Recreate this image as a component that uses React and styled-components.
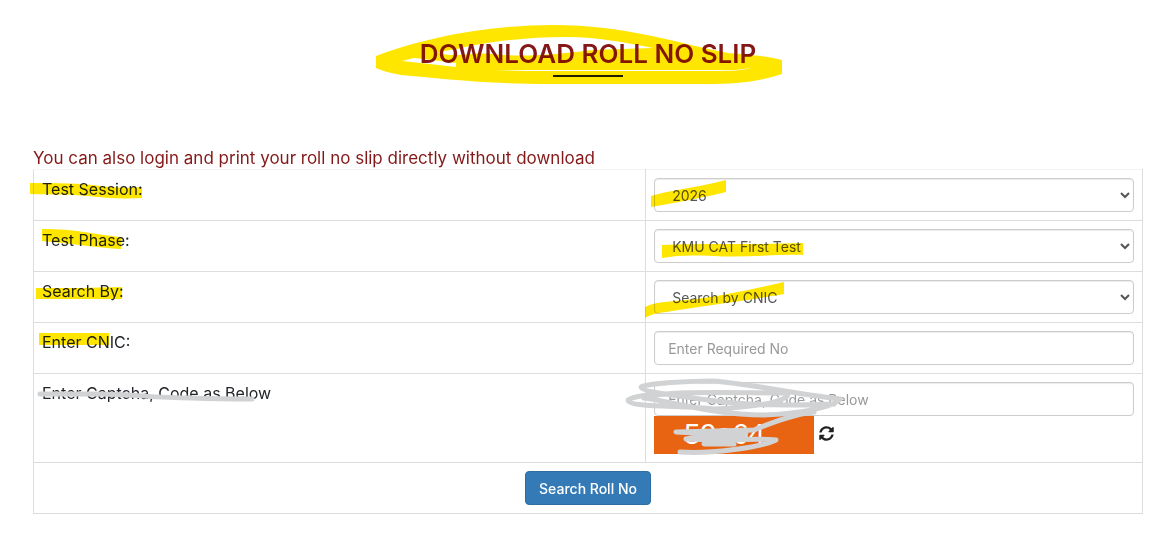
import React, { useState } from "react";
import styled, { createGlobalStyle } from "styled-components";
import { FaSyncAlt } from "react-icons/fa";

const GlobalStyle = createGlobalStyle`
  * {
    box-sizing: border-box;
  }

  body {
    margin: 0;
    background: #fff;
    color: #212529;
    font-family: Inter, "Open Sans", sans-serif;
    font-size: 16px;
    line-height: 22px;
  }
`;

const YELLOW = "#ffe600";
const GREY = "#d1d2d3";
const MAROON = "#841818";

const FIELDS = [
  {
    id: "session",
    label: "Test Session:",
    options: ["2026", "2025"],
    labelMark: "M-12 5 C14 5 38 5 58 8 C74 10 86 10 100 9 V20 C80 21 62 20 46 18 C28 16 10 17 -12 16Z",
    fieldMark: "M-3 18 C16 12 42 10 72 2 V14 C48 20 24 24 -3 29Z",
  },
  {
    id: "phase",
    label: "Test Phase:",
    options: ["KMU CAT First Test", "KMU CAT Second Test"],
    labelMark: "M0 0 C36 0 48 5 79 8 V20 C54 19 30 14 0 12Z",
    fieldMark: "M8 16 C40 14 100 16 149 14 V26 C120 25 90 29 60 27 C38 26 24 26 8 29Z",
  },
  {
    id: "searchBy",
    label: "Search By:",
    options: ["Search by CNIC", "Search by Roll No"],
    labelMark: "M-6 8 C24 8 52 8 80 7 V19 H-6Z",
    fieldMark: "M-9 27 C4 20 24 22 50 18 C82 13 104 8 130 2 V14 C98 20 48 26 18 31 C6 33 0 33 -9 38Z",
  },
];

const Mark = ({ path }) => (
  <Marker aria-hidden="true">
    <path d={path} fill={YELLOW} />
  </Marker>
);

const App = () => {
  const [values, setValues] = useState({
    session: "2026",
    phase: "KMU CAT First Test",
    searchBy: "Search by CNIC",
    cnic: "",
    captcha: "",
  });

  const handleChange = (e) => {
    const { name, value } = e.target;
    setValues((prev) => ({ ...prev, [name]: value }));
  };

  const renderSelectRows = () => {
    return FIELDS.map((field) => (
      <tr key={field.id}>
        <Cell>
          <Anchor>
            <label htmlFor={field.id}>{field.label}</label>
            <Mark path={field.labelMark} />
          </Anchor>
        </Cell>
        <Cell>
          <Anchor>
            <Select
              id={field.id}
              name={field.id}
              value={values[field.id]}
              onChange={handleChange}
            >
              {field.options.map((option) => (
                <option key={option}>{option}</option>
              ))}
            </Select>
            <Mark path={field.fieldMark} />
          </Anchor>
        </Cell>
      </tr>
    ));
  };

  return (
    <>
      <GlobalStyle />
      <Page>
        <Header>
          <Title>DOWNLOAD ROLL NO SLIP</Title>
          <Underline />
          <TitleMarker viewBox="0 0 406 60" aria-hidden="true">
            <path
              d="M0 31 C45 14 110 0 177 0 C250 0 300 18 352 28 C378 30 395 32 406 35 V49 C382 57 360 59 330 59 H170 C110 59 60 53 25 50 C15 48 6 46 0 43Z
                 M26 36 C45 38 62 40 80 42 V38 C64 36 50 34 38 33Z
                 M62 28 C66 26 74 25 81 24 C110 17 150 12 190 12 C225 12 250 18 277 23 C255 24 235 24 217 25 C190 28 160 32 127 30 C115 29 104 28 96 29 C84 30 72 31 62 28Z
                 M117 45 H355 C365 45 372 43 375 43 C365 46 350 46 330 46 H150Z"
              fill={YELLOW}
              fillRule="evenodd"
            />
          </TitleMarker>
        </Header>

        <Notice>
          You can also login and print your roll no slip directly without
          download
        </Notice>

        <form onSubmit={(e) => e.preventDefault()}>
          <Table>
            <tbody>
              {renderSelectRows()}
              <tr>
                <Cell>
                  <Anchor>
                    <label htmlFor="cnic">Enter CNIC:</label>
                    <Mark path="M-3 2 H67 V14 C44 14 20 14 -3 14Z" />
                  </Anchor>
                </Cell>
                <Cell>
                  <Input
                    id="cnic"
                    name="cnic"
                    placeholder="Enter Required No"
                    value={values.cnic}
                    onChange={handleChange}
                  />
                </Cell>
              </tr>
              <tr>
                <Cell>
                  <Anchor>
                    <label htmlFor="captcha">Enter Captcha, Code as Below</label>
                    <Scribble aria-hidden="true">
                      <path d="M-2 12 H56 C90 12 110 16 150 16 C175 17 190 17 210 17" />
                    </Scribble>
                  </Anchor>
                </Cell>
                <Cell>
                  <Anchor>
                    <Input
                      id="captcha"
                      name="captcha"
                      placeholder="Enter Captcha, Code as Below"
                      value={values.captcha}
                      onChange={handleChange}
                    />
                    <CaptchaRow>
                      <CaptchaCode>59a64</CaptchaCode>
                      <Refresh type="button" aria-label="Refresh captcha">
                        <FaSyncAlt />
                      </Refresh>
                    </CaptchaRow>
                    <Scribble aria-hidden="true">
                      <path d="M180 22 C140 24 95 23 70 20 C40 16 -13 10 -13 5 C-5 1 35 -1 60 -1 C95 2 150 13 186 17 C180 25 145 32 110 33 C60 33 20 20 -10 16 C10 8 80 11 134 11 C136 20 100 25 60 27 C30 23 -26 26 -26 18 C-20 14 -5 12 20 12" />
                      <path d="M160 30 C135 33 112 43 100 48 L22 50 L60 52 L32 57 L62 58 C90 58 108 56 122 58 C105 66 55 72 26 70" />
                      <path d="M50 51 H92 L46 56 H92 L50 62 H80" />
                    </Scribble>
                  </Anchor>
                </Cell>
              </tr>
              <tr>
                <Cell colSpan={2} $center>
                  <Button type="submit">Search Roll No</Button>
                </Cell>
              </tr>
            </tbody>
          </Table>
        </form>
      </Page>
    </>
  );
};

const Page = styled.main`
  padding: 40px 16px 24px 33px;
`;

const Header = styled.header`
  position: relative;
  display: flex;
  flex-direction: column;
  align-items: center;
  gap: 8px;
  margin-bottom: 70px;
`;

const Title = styled.h1`
  margin: 0;
  color: ${MAROON};
  font-size: 26px;
  font-weight: 600;
  line-height: 27px;
`;

const Underline = styled.span`
  width: 70px;
  height: 2px;
  background: #222;
`;

const TitleMarker = styled.svg`
  position: absolute;
  top: -15px;
  left: 50%;
  width: 406px;
  height: 60px;
  margin-left: -212px;
  mix-blend-mode: multiply;
  pointer-events: none;
`;

const Notice = styled.p`
  margin: 0;
  color: ${MAROON};
  font-size: 17px;
`;

const Table = styled.table`
  width: 100%;
  border-collapse: collapse;
  table-layout: fixed;
`;

const Cell = styled.td`
  padding: 8px;
  border: 1px solid #ddd;
  vertical-align: top;
  text-align: ${({ $center }) => ($center ? "center" : "left")};

  &:first-child {
    width: 55.2%;
  }

  tr:first-child > & {
    border-top-color: #f4f4f4;
  }
`;

const Anchor = styled.div`
  position: relative;
`;

const Marker = styled.svg`
  position: absolute;
  top: 0;
  left: 0;
  width: 100%;
  height: 100%;
  overflow: visible;
  mix-blend-mode: multiply;
  pointer-events: none;
`;

const Scribble = styled(Marker)`
  mix-blend-mode: normal;
  fill: none;
  stroke: ${GREY};
  stroke-width: 5px;
  stroke-linecap: round;
  stroke-linejoin: round;
`;

const Input = styled.input`
  display: block;
  width: 100%;
  height: 34px;
  padding: 6px 13px;
  border: 1px solid #ccc;
  border-radius: 4px;
  background: #fff;
  box-shadow: inset 0 1px 1px rgba(0, 0, 0, 0.08);
  color: #555;
  font-family: inherit;
  font-size: 14px;

  &::placeholder {
    color: #999;
    opacity: 1;
  }
`;

const Select = styled(Input).attrs({ as: "select" })`
  padding-right: 0;
`;

const CaptchaRow = styled.div`
  display: flex;
  align-items: center;
  gap: 5px;
`;

const CaptchaCode = styled.div`
  width: 160px;
  height: 38px;
  padding-left: 30px;
  background: #e86412;
  color: #fff;
  font-family: "Liberation Sans", Arial, sans-serif;
  font-size: 29px;
  line-height: 36px;
`;

const Refresh = styled.button`
  display: flex;
  padding: 0 0 4px;
  border: 0;
  background: none;
  color: #222;
  font-size: 15px;
  cursor: pointer;
`;

const Button = styled.button`
  display: inline-block;
  height: 34px;
  padding: 0 13px;
  border: 1px solid #2e6da4;
  border-radius: 4px;
  background: #337ab7;
  color: #fff;
  font-family: inherit;
  font-size: 14px;
  font-weight: 500;
  vertical-align: top;
  cursor: pointer;
`;

export default App;
